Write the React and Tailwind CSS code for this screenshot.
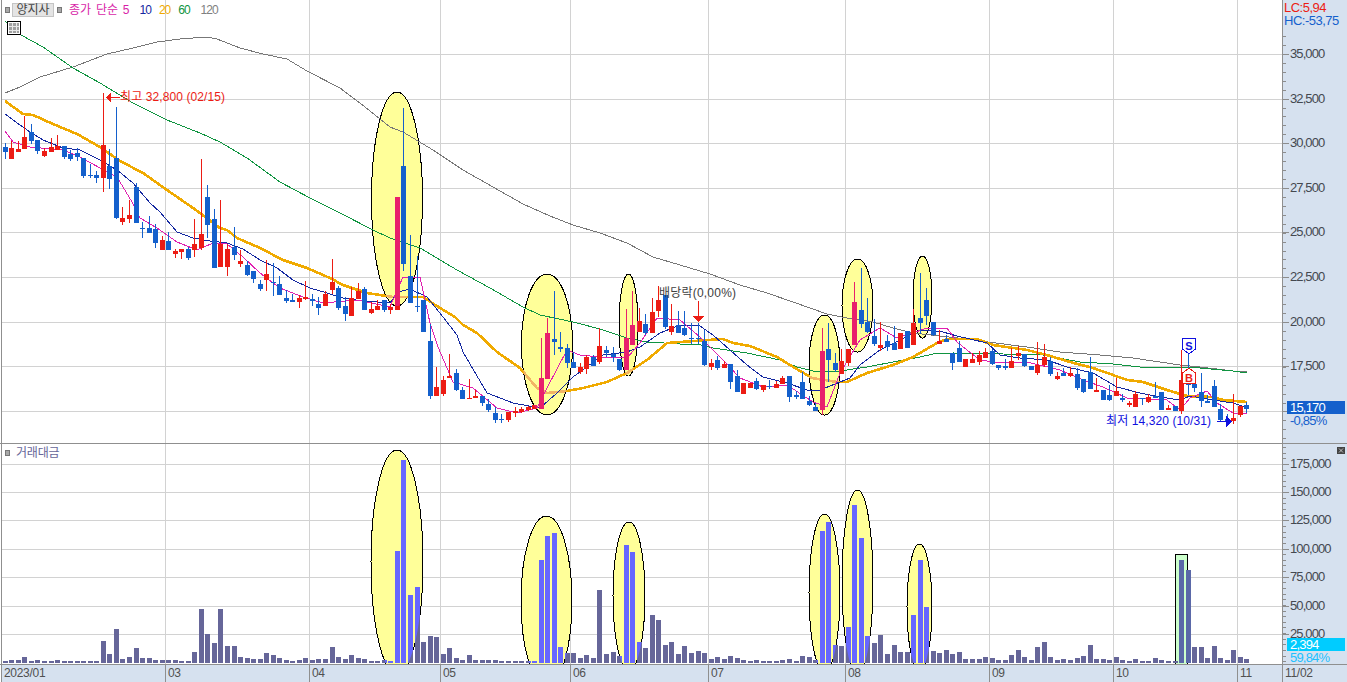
import React from 'react';

// [bodyTop, bodyBottom, wickTop, wickBottom, colour]
const candles = [
  [147,152,143,159,'b'],[148,159,141,159,'r'],[149,152,141,152,'r'],[137,149,116,149,'r'],[132,141,124,144,'b'],
  [140,151,140,154,'b'],[151,156,148,157,'r'],[147,152,138,152,'r'],[146,150,135,150,'r'],[146,157,146,159,'b'],
  [154,159,150,161,'b'],[153,157,148,161,'b'],[158,176,158,178,'b'],[175,176,164,178,'b'],[175,178,171,183,'b'],
  [145,178,93,192,'r'],[166,179,149,189,'b'],[158,218,107,219,'b'],[218,222,207,225,'r'],[215,219,200,223,'r'],
  [187,223,183,223,'b'],[228,229,222,238,'b'],[228,233,216,233,'b'],[229,243,224,248,'b'],[240,250,236,250,'r'],
  [241,250,232,250,'b'],[251,254,249,258,'r'],[249,252,249,259,'r'],[249,258,247,260,'b'],[244,250,219,257,'r'],
  [234,248,159,250,'r'],[197,225,185,238,'b'],[219,268,209,268,'b'],[244,267,200,267,'r'],[249,267,244,276,'r'],
  [247,255,227,260,'b'],[261,264,250,267,'r'],[265,275,261,276,'b'],[271,279,271,283,'b'],[284,289,280,291,'b'],
  [274,280,260,291,'r'],[282,283,263,296,'b'],[284,295,276,295,'b'],[298,301,290,303,'b'],[300,302,294,302,'b'],
  [298,302,295,308,'r'],[297,299,281,300,'r'],[299,301,294,306,'b'],[304,308,297,315,'b'],[294,306,291,306,'r'],
  [282,290,259,294,'r'],[288,308,286,310,'b'],[306,314,297,321,'b'],[298,316,287,316,'r'],[291,299,283,299,'r'],
  [289,310,287,310,'b'],[309,313,302,314,'r'],[306,310,300,310,'r'],[300,310,300,312,'b'],[307,310,304,314,'r'],
  [197,310,197,310,'r'],[166,264,108,271,'b'],[276,303,235,303,'b'],[306,307,256,312,'b'],[300,332,300,332,'b'],
  [341,396,324,399,'b'],[387,396,367,396,'r'],[380,394,376,396,'r'],[376,378,354,378,'r'],[373,390,369,391,'b'],
  [390,399,387,399,'b'],[398,399,379,399,'r'],[396,398,390,398,'r'],[396,403,396,406,'b'],[404,410,399,412,'b'],
  [413,420,407,423,'b'],[419,420,414,423,'b'],[412,420,412,422,'r'],[411,413,407,417,'r'],[409,412,407,413,'r'],
  [407,410,406,411,'r'],[405,409,405,409,'r'],[378,409,338,409,'r'],[333,379,318,379,'r'],[339,342,291,355,'b'],
  [347,349,332,352,'b'],[348,363,344,368,'b'],[362,368,352,368,'b'],[367,372,363,374,'r'],[357,369,355,374,'r'],
  [357,366,355,366,'b'],[346,362,328,364,'r'],[350,353,346,357,'b'],[354,357,347,362,'b'],[359,370,359,371,'b'],
  [338,370,309,370,'r'],[325,345,291,345,'r'],[321,332,308,332,'r'],[324,333,314,335,'b'],[312,333,298,333,'r'],
  [300,311,286,317,'r'],[295,327,295,329,'b'],[326,332,304,335,'r'],[325,333,311,333,'b'],[328,335,311,336,'b'],
  [338,339,323,344,'b'],[338,339,323,344,'b'],[341,365,330,366,'b'],[363,367,359,370,'r'],[360,368,356,370,'b'],
  [364,368,361,368,'r'],[364,382,364,389,'b'],[376,392,370,392,'b'],[383,394,383,394,'r'],[383,388,383,388,'r'],
  [381,389,378,390,'b'],[385,390,385,392,'r'],[386,387,380,389,'b'],[384,388,381,388,'r'],[378,384,376,384,'r'],
  [376,397,376,402,'b'],[395,397,391,399,'b'],[382,399,372,399,'b'],[401,405,396,406,'b'],[407,411,403,411,'b'],
  [351,410,328,415,'r'],[349,360,323,382,'b'],[363,370,353,372,'b'],[361,374,349,374,'r'],[349,363,349,366,'r'],
  [302,345,282,345,'r'],[310,324,268,328,'b'],[322,332,298,333,'b'],[336,344,319,346,'b'],[345,348,322,351,'r'],
  [341,347,335,351,'b'],[343,350,326,350,'b'],[333,349,333,349,'r'],[331,348,331,348,'b'],[323,345,309,345,'r'],
  [318,323,273,334,'b'],[300,316,288,325,'b'],[322,335,322,336,'b'],[341,344,330,344,'r'],[339,342,335,342,'b'],
  [353,363,353,370,'b'],[348,362,341,362,'b'],[359,367,359,367,'r'],[359,363,353,363,'r'],[355,362,351,365,'r'],
  [352,358,348,358,'r'],[351,364,349,365,'b'],[365,368,365,370,'b'],[366,368,359,370,'b'],[361,368,348,368,'r'],
  [353,356,346,360,'r'],[354,366,354,367,'b'],[366,370,366,370,'b'],[365,373,342,375,'r'],[357,365,344,367,'r'],
  [361,374,357,376,'b'],[376,379,372,380,'r'],[373,376,368,376,'b'],[373,376,367,377,'r'],[374,388,368,390,'b'],
  [379,392,379,393,'b'],[372,389,357,389,'b'],[390,392,378,392,'r'],[390,400,390,400,'b'],[395,400,385,401,'b'],
  [391,396,378,396,'r'],[398,400,394,402,'b'],[403,405,401,407,'r'],[394,407,391,407,'r'],[398,399,398,405,'b'],
  [397,402,394,403,'r'],[396,398,382,398,'b'],[392,410,392,410,'b'],[408,410,405,410,'r'],[406,411,406,411,'b'],
  [380,411,350,414,'r'],[382,385,354,395,'b'],[384,388,372,392,'b'],[392,401,373,407,'b'],[401,403,395,403,'b'],
  [386,407,380,407,'b'],[409,420,404,421,'b'],[419,422,414,425,'b'],[418,421,394,424,'r'],[406,415,406,417,'r'],
  [405,409,402,413,'b'],
];

const volumes = [
  2,3,3,6,2,3,2,2,3,2,2,2,2,2,2,22,9,34,4,6,15,5,5,3,3,3,3,2,2,11,54,29,20,54,17,17,6,5,4,4,10,8,5,3,2,3,5,3,4,4,
  16,6,4,8,5,4,2,2,3,2,112,203,68,76,21,27,26,9,15,5,3,8,3,3,3,3,2,2,2,2,2,2,103,127,130,16,10,10,5,8,5,73,9,11,7,118,111,21,15,48,
  43,18,21,9,17,10,12,10,4,6,4,7,5,3,2,3,2,2,2,3,4,2,7,6,3,132,141,18,17,36,158,125,27,20,28,9,18,11,11,48,103,56,12,10,13,9,11,4,4,4,
  6,5,3,3,8,13,6,3,16,21,6,3,4,3,5,7,18,4,4,3,6,3,2,4,2,2,5,3,2,2,103,93,16,16,5,17,5,3,13,6,4,
];

const ma120 = '5,93 20,87 40,77 73,67 107,54 133,48 157,42 180,39 207,37 217,39 240,48 263,54 287,59 307,71 340,88 360,103 390,127 403,132 433,150 463,170 493,187 523,204 550,216 573,225 600,233 627,243 653,257 680,265 710,274 740,285 767,293 793,302 827,314 847,318 873,322 893,328 913,333 940,336 967,339 980,341 1027,347 1060,352 1100,355 1133,358 1180,365 1200,367 1233,371 1247,371';
const ma60 = '5,21 21,35 43,47 73,68 100,83 133,103 167,120 200,133 220,142 247,158 280,182 310,198 340,213 373,230 390,238 420,248 457,270 490,288 523,307 540,315 573,322 600,329 627,338 647,342 680,344 697,344 713,348 747,353 780,360 797,367 817,372 840,371 867,367 893,362 920,357 933,354 953,353 1003,354 1043,355 1080,362 1113,364 1140,367 1180,367 1200,368 1233,371 1247,373';
const ma20 = '5,101 23,114 33,115 53,124 77,134 100,147 120,161 143,173 167,190 193,208 220,228 227,230 237,238 260,248 283,260 307,268 330,278 343,285 367,293 393,297 423,297 440,308 455,317 463,325 477,333 497,352 520,368 537,388 547,393 567,391 583,388 607,382 627,373 647,360 667,343 680,342 723,339 733,343 750,346 777,357 790,365 812,378 837,382 847,382 867,373 893,365 913,357 937,343 947,339 977,339 993,345 1027,350 1047,355 1070,362 1093,368 1113,375 1127,380 1143,382 1167,390 1187,396 1213,397 1223,400 1247,402';
const ma10 = '5,114 20,125 30,132 43,140 63,148 80,150 100,160 117,170 133,183 150,203 160,212 177,232 193,238 210,241 227,243 243,249 260,260 277,268 293,280 310,288 327,293 343,298 363,301 390,303 398,292 410,289 427,297 443,317 457,335 463,352 487,393 513,403 540,408 557,393 573,377 603,355 627,352 640,347 660,333 680,325 700,326 713,335 730,350 747,365 763,377 787,383 807,390 820,390 840,382 850,378 860,365 880,350 900,340 920,330 943,332 957,336 987,343 1000,355 1020,358 1047,360 1067,367 1093,373 1117,387 1140,393 1160,397 1180,400 1190,396 1213,400 1233,403 1247,408';
const ma5 = '5,131 13,142 30,147 63,150 80,157 100,168 117,177 132,202 140,218 157,228 177,242 197,250 213,243 227,244 243,257 260,273 280,288 303,297 323,303 357,300 390,307 403,277 420,277 430,323 438,347 453,382 473,388 497,408 517,413 537,408 547,388 567,350 580,355 600,357 627,358 640,343 657,318 680,320 700,337 723,360 740,378 763,387 787,385 813,402 827,407 840,373 860,340 880,328 897,338 913,333 927,328 947,328 957,342 967,350 980,360 1000,363 1027,362 1060,370 1083,380 1103,387 1127,398 1167,400 1180,410 1190,398 1207,391 1217,403 1233,413 1247,414';

const priceEllipses = [
  [397, 199, 25.5, 107], [547, 344.5, 25.5, 70.5], [628.5, 325, 9.5, 51],
  [824.5, 365, 15.5, 50], [857.5, 305.5, 15.5, 46.5], [922.5, 297, 9.5, 41],
];
const volEllipses = [
  [397, 562, 26, 112], [546.5, 601, 25.5, 85], [629, 596, 16, 74],
  [824.5, 593, 15.5, 79], [857.5, 582, 15.5, 92], [919.5, 607, 12.5, 63],
];

const monthLines = [165, 309, 440, 570, 708, 845, 989, 1113, 1237];
const priceGrid = [54, 99, 143, 188, 232, 277, 322, 366, 411];
const priceLabels = ['35,000', '32,500', '30,000', '27,500', '25,000', '22,500', '20,000', '17,500'];
const volGrid = [464, 492, 520, 549, 577, 606, 634];
const volLabels = ['175,000', '150,000', '125,000', '100,000', '75,000', '50,000', '25,000'];

const months = [
  { label: '2023/01', width: 'w-[164px]' },
  { label: '03', width: 'w-[144px]' },
  { label: '04', width: 'w-[131px]' },
  { label: '05', width: 'w-[130px]' },
  { label: '06', width: 'w-[138px]' },
  { label: '07', width: 'w-[137px]' },
  { label: '08', width: 'w-[144px]' },
  { label: '09', width: 'w-[124px]' },
  { label: '10', width: 'w-[124px]' },
  { label: '11', width: 'w-[45px]' },
  { label: '11/02', width: 'flex-1' },
];

const candleX = (i) => Math.floor(5.3 + 6.535 * i);

const Candles = ({ red, blue }) =>
  candles.map(([top, bot, hi, lo, c], i) => {
    const fill = c === 'r' ? red : blue;
    if (!fill) return null;
    const x = candleX(i);
    return (
      <g key={i} fill={fill}>
        <rect x={x} y={hi} width="1" height={lo - hi} />
        <rect x={x - 2} y={top} width="5" height={Math.max(bot - top, 1)} />
      </g>
    );
  });

const Line = ({ points, color, width = 1 }) => (
  <polyline points={points} fill="none" stroke={color} strokeWidth={width} />
);

const Square = ({ className = '' }) => (
  <span className={`block w-[5px] h-[6px] bg-[#a8a8a8] border border-[#777] ${className}`} />
);

const PriceChart = () => (
  <svg viewBox="2 0 1280 443" width="1280" height="443" className="block" shapeRendering="crispEdges">
    <defs>
      <clipPath id="priceClip">
        {priceEllipses.map(([cx, cy, rx, ry]) => (
          <ellipse key={cx} cx={cx} cy={cy} rx={rx} ry={ry} />
        ))}
      </clipPath>
    </defs>
    {priceGrid.map((y) => <rect key={y} x="2" y={y} width="1280" height="1" fill="#d2d2d2" />)}
    {monthLines.map((x) => <rect key={x} x={x} y="0" width="1" height="443" fill="#d2d2d2" />)}

    {priceEllipses.map(([cx, cy, rx, ry]) => (
      <ellipse key={cx} cx={cx} cy={cy} rx={rx} ry={ry} fill="#ffff99" stroke="#000" strokeWidth="1" />
    ))}

    <Line points={ma120} color="#777777" />
    <Line points={ma60} color="#0f9440" />
    <Line points={ma20} color="#f0aa00" width={2.6} />
    <g clipPath="url(#priceClip)"><Line points={ma20} color="#f2b565" width={2.6} /></g>
    <Line points={ma10} color="#1428a0" />
    <Line points={ma5} color="#e020b0" />

    <Candles red="#ec1c14" blue="#1460cc" />
    <g clipPath="url(#priceClip)"><Candles red="#e8206c" /></g>

    {/* high / low / dividend marks */}
    <polygon points="106,97.5 111,93 111,102" fill="#ec1c14" />
    <rect x="111" y="97" width="9" height="1" fill="#ec1c14" />
    <text x="120" y="101" fontSize="12" fill="#ec1c14" textLength="105" shapeRendering="auto">최고 32,800 (02/15)</text>
    <text x="659" y="297" fontSize="12" fill="#404040" textLength="77">배당락(0,00%)</text>
    <rect x="698" y="301" width="1" height="16" fill="#ec1c14" />
    <polygon points="693,316 704,316 698.5,322" fill="#ec1c14" />
    <text x="1106" y="425" fontSize="12" fill="#1010e0" textLength="105">최저 14,320 (10/31)</text>
    <rect x="1217" y="421" width="10" height="1" fill="#1010e0" />
    <polygon points="1226,416 1232,421.5 1226,427" fill="#1010e0" />

    {/* sell / buy signals */}
    <polygon points="1182.5,338.5 1195.5,338.5 1195.5,349 1189,354 1182.5,349" fill="#fff" stroke="#1010e0" />
    <text x="1189" y="350" fontSize="11" fontWeight="700" fill="#1010e0" textAnchor="middle">S</text>
    <polygon points="1182.5,373 1189,368 1195.5,373 1195.5,383 1182.5,383" fill="#fff" stroke="#ec1c14" />
    <text x="1189" y="382" fontSize="11" fontWeight="700" fill="#ec1c14" textAnchor="middle">B</text>
  </svg>
);

const VolumeChart = () => (
  <svg viewBox="2 444 1280 220" width="1280" height="220" className="block" shapeRendering="crispEdges">
    <defs>
      <clipPath id="volClip">
        {volEllipses.map(([cx, cy, rx, ry]) => (
          <ellipse key={cx} cx={cx} cy={cy} rx={rx} ry={ry} />
        ))}
      </clipPath>
    </defs>
    {volGrid.map((y) => <rect key={y} x="2" y={y} width="1280" height="1" fill="#d2d2d2" />)}
    {monthLines.map((x) => <rect key={x} x={x} y="444" width="1" height="220" fill="#d2d2d2" />)}

    {volEllipses.map(([cx, cy, rx, ry]) => (
      <ellipse key={cx} cx={cx} cy={cy} rx={rx} ry={ry} fill="#ffff99" stroke="#000" strokeWidth="1" />
    ))}
    <rect x="1175.5" y="554.5" width="12" height="110" fill="#ccffcc" stroke="#000" />

    {volumes.map((h, i) => (
      <rect key={i} x={candleX(i) - 2} y={663 - h} width="5" height={h} fill={i === 180 || i === 181 ? '#5a68a8' : '#666699'} />
    ))}
    <g clipPath="url(#volClip)">
      {volumes.map((h, i) => (
        <rect key={i} x={candleX(i) - 2} y={663 - h} width="5" height={h} fill="#6666ff" />
      ))}
    </g>
  </svg>
);

const AxisTicks = ({ start, end, major, step }) => {
  const ticks = [];
  for (let y = start; y < end; y += step) ticks.push(Math.round(y));
  return (
    <>
      {ticks.map((y) => <rect key={y} x="1283" y={y} width="3" height="1" fill="#8c8c8c" />)}
      {major.map((y) => <rect key={y} x="1283" y={y} width="6" height="1" fill="#8c8c8c" />)}
    </>
  );
};

const AxisLabels = ({ ys, labels }) =>
  labels.map((label, i) => (
    <text key={label} x="1290" y={ys[i] + 4} fontSize="13" letterSpacing="-0.9" fill="#44484f">{label}</text>
  ));

const App = () => (
  <div className="w-[1347px] h-[682px] overflow-hidden bg-white font-['Liberation_Sans','Noto_Sans_CJK_KR',sans-serif]">
    {/* price panel */}
    <div className="flex h-[444px] border-b border-[#8f8f8f]">
      <div className="relative ml-px w-[1282px] bg-white border-l border-r border-[#8f8f8f]">
        <PriceChart />
        <div className="absolute left-[3px] top-[3px] flex items-center text-[12px] leading-[14px] whitespace-nowrap">
          <Square />
          <span className="ml-[2px] w-[42px] h-[14px] bg-[#e4e4e4] border border-[#c4c4c4] text-[#444] text-center leading-[12px]">양지사</span>
          <Square className="ml-[3px]" />
          <span className="ml-[7px] text-[#d81fa8] [word-spacing:1.5px]">종가 단순 5</span>
          <span className="ml-[10px] text-[#1428a0] tracking-[-1px]">10</span>
          <span className="ml-[8px] text-[#f0aa00] tracking-[-1px]">20</span>
          <span className="ml-[8px] text-[#0f9440] tracking-[-1px]">60</span>
          <span className="ml-[11px] text-[#808080] tracking-[-1px]">120</span>
        </div>
        <svg viewBox="0 0 14 14" width="14" height="14" className="absolute left-[5px] top-[21px]" shapeRendering="crispEdges">
          <rect x="0.5" y="0.5" width="13" height="13" fill="#fff" stroke="#000" />
          <rect x="2" y="2" width="10" height="10" fill="#a0a0a0" />
          <path d="M2 5h10M2 9h10M5 2v10M9 2v10" stroke="#e8e8e8" />
        </svg>
      </div>
      <div className="relative flex-1 bg-[#d6e1ef]">
        <svg viewBox="1283 0 64 443" width="64" height="443" className="block" shapeRendering="crispEdges">
          <AxisTicks start={36} end={443} step={8.94} major={priceGrid} />
          <AxisLabels ys={priceGrid} labels={priceLabels} />
        </svg>
        <div className="absolute left-px top-[1px] text-[13px] leading-[13px] tracking-[-0.5px]">
          <div className="text-[#ec1c14]">LC:5,94</div>
          <div className="text-[#1460cc]">HC:-53,75</div>
        </div>
        <div className="absolute left-[4px] top-[401px] w-[58px] text-[13px] leading-[13px] tracking-[-0.8px]">
          <div className="bg-[#1460cc] text-white pl-[3px]">15,170</div>
          <div className="text-[#1460cc] pl-[3px]">-0,85%</div>
        </div>
      </div>
    </div>

    {/* volume panel */}
    <div className="flex h-[221px] border-b border-[#8f8f8f]">
      <div className="relative ml-px w-[1282px] bg-white border-l border-r border-[#8f8f8f]">
        <VolumeChart />
        <div className="absolute left-[3px] top-[2px] flex items-center text-[12px] leading-[14px] text-[#666699]">
          <Square />
          <span className="ml-[6px] tracking-[-0.2px]">거래대금</span>
        </div>
      </div>
      <div className="relative flex-1 bg-[#d6e1ef]">
        <svg viewBox="1283 444 64 220" width="64" height="220" className="block" shapeRendering="crispEdges">
          <AxisTicks start={447} end={663} step={5.64} major={volGrid} />
          <AxisLabels ys={volGrid} labels={volLabels} />
        </svg>
        <div className="absolute left-[4px] top-[194px] w-[58px] text-[13px] leading-[13px] tracking-[-0.8px]">
          <div className="bg-[#00ccff] text-white pl-[3px]">2,394</div>
          <div className="text-[#20c0ff] pl-[3px]">59,84%</div>
        </div>
        <svg viewBox="0 0 8 7" width="8" height="7" className="absolute left-[54px] top-[3px]">
          <rect width="8" height="7" fill="#444" />
          <path d="M2 1.5l4 4M6 1.5l-4 4" stroke="#ddd" strokeWidth="0.8" />
        </svg>
      </div>
    </div>

    {/* time axis */}
    <div className="flex h-[17px] ml-px bg-[#d6e1ef] text-[12px] leading-[17px] text-[#505050] tracking-[-0.3px]">
      {months.map((m) => (
        <div key={m.label} className={`${m.width} border-l border-[#8f8f8f] pl-[2px]`}>{m.label}</div>
      ))}
    </div>
  </div>
);

export default App;
